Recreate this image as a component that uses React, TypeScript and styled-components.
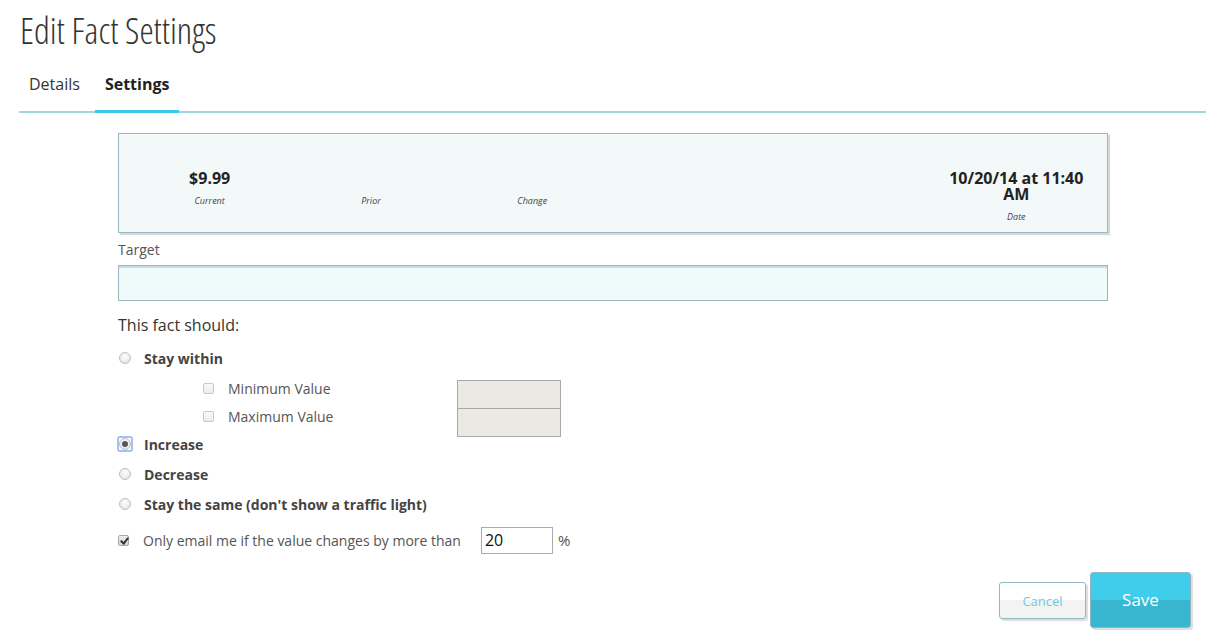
import React from 'react'
import styled, { createGlobalStyle } from 'styled-components'

const GlobalStyle = createGlobalStyle`
  body {
    margin: 0;
    background: #ffffff;
    font-family: 'Open Sans', 'Liberation Sans', sans-serif;
    color: #444;
  }
`

interface Metric {
  value?: string
  label: string
}

const metrics: Metric[] = [
  { value: '$9.99', label: 'Current' },
  { label: 'Prior' },
  { label: 'Change' },
  { label: '' },
  { label: '' },
  { value: '10/20/14 at 11:40 AM', label: 'Date' },
]

const directions = [
  { label: 'Increase', checked: true },
  { label: 'Decrease', checked: false },
  { label: "Stay the same (don't show a traffic light)", checked: false },
]

export default function App() {
  return (
    <Styled.Root>
      <GlobalStyle />
      <Styled.Title>Edit Fact Settings</Styled.Title>

      <Styled.Tabs>
        <Styled.Tab>Details</Styled.Tab>
        <Styled.Tab active>Settings</Styled.Tab>
      </Styled.Tabs>

      <Styled.Body>
        <Styled.Summary>
          {metrics.map((m, i) => (
            <Styled.Metric key={i}>
              <Styled.MetricValue>{m.value}</Styled.MetricValue>
              {m.label && <Styled.MetricLabel>{m.label}</Styled.MetricLabel>}
            </Styled.Metric>
          ))}
        </Styled.Summary>

        <Styled.FieldLabel>Target</Styled.FieldLabel>
        <Styled.TargetInput />

        <Styled.Heading>This fact should:</Styled.Heading>

        <Styled.Options>
          <Styled.Option>
            <Styled.Radio />
            <Styled.OptionLabel>Stay within</Styled.OptionLabel>
          </Styled.Option>

          <Styled.Range>
            <Styled.RangeChecks>
              <Styled.SubOption>
                <Styled.Check />
                <Styled.SubLabel>Minimum Value</Styled.SubLabel>
              </Styled.SubOption>
              <Styled.SubOption>
                <Styled.Check />
                <Styled.SubLabel>Maximum Value</Styled.SubLabel>
              </Styled.SubOption>
            </Styled.RangeChecks>
            <Styled.RangeInputs>
              <Styled.RangeInput />
              <Styled.RangeInput />
            </Styled.RangeInputs>
          </Styled.Range>

          {directions.map((d) => (
            <Styled.Option key={d.label}>
              <Styled.Radio checked={d.checked} />
              <Styled.OptionLabel>{d.label}</Styled.OptionLabel>
            </Styled.Option>
          ))}
        </Styled.Options>

        <Styled.EmailRow>
          <Styled.Check checked />
          <Styled.EmailText>Only email me if the value changes by more than</Styled.EmailText>
          <Styled.PercentInput>20</Styled.PercentInput>
          <Styled.Unit>%</Styled.Unit>
        </Styled.EmailRow>
      </Styled.Body>

      <Styled.Footer>
        <Styled.CancelButton>Cancel</Styled.CancelButton>
        <Styled.SaveButton>Save</Styled.SaveButton>
      </Styled.Footer>
    </Styled.Root>
  )
}

const Styled = {
  Root: styled.div`
    width: 1219px;
    height: 640px;
    padding: 0 13px 0 19px;
    box-sizing: border-box;
    overflow: hidden;
  `,
  Title: styled.h1`
    margin: 0;
    padding: 10px 0 0 1px;
    height: 56px;
    box-sizing: border-box;
    font-family: 'Open Sans', sans-serif;
    font-stretch: 75%;
    font-weight: 300;
    font-size: 36px;
    line-height: 42px;
    color: #333;
  `,
  Tabs: styled.div`
    display: flex;
    border-bottom: 2px solid #a2d6df;
    height: 57px;
    padding-top: 3px;
    box-sizing: border-box;
  `,
  Tab: styled.div<{ active?: boolean }>`
    display: flex;
    align-items: center;
    padding: 0 10px 1px;
    margin-bottom: -2px;
    border-bottom: 3px solid ${({ active }) => (active ? '#3cc8e8' : 'transparent')};
    font-size: 16px;
    font-weight: ${({ active }) => (active ? 700 : 400)};
    color: ${({ active }) => (active ? '#222' : '#333')};
    &:first-child {
      padding-right: 15px;
    }
  `,
  Body: styled.div`
    padding: 20px 0 0 99px;
    width: 990px;
  `,
  Summary: styled.div`
    display: grid;
    grid-template-columns: repeat(6, 1fr);
    height: 100px;
    box-sizing: border-box;
    padding: 36px 10px 0;
    background: #f3f8f8;
    border: 1px solid #9ab9bf;
    box-shadow: 2px 2px 1px #d8d8d8;
  `,
  Metric: styled.div`
    display: flex;
    flex-direction: column;
    align-items: center;
    text-align: center;
    padding: 0 6px;
  `,
  MetricValue: styled.div`
    min-height: 16px;
    font-size: 16px;
    font-weight: 700;
    line-height: 16px;
    color: #222;
  `,
  MetricLabel: styled.div`
    margin-top: 9px;
    font-size: 9px;
    font-style: italic;
    color: #444;
    line-height: 12px;
  `,
  FieldLabel: styled.div`
    margin-top: 7px;
    font-size: 14px;
    line-height: 20px;
    color: #555;
  `,
  TargetInput: styled.div`
    margin-top: 5px;
    height: 36px;
    box-sizing: border-box;
    background: #effafb;
    border: 1px solid #9ab9bf;
    box-shadow: inset 0 2px 0 #c7dde0;
  `,
  Heading: styled.div`
    margin-top: 13px;
    font-size: 16px;
    line-height: 22px;
    color: #333;
  `,
  Options: styled.div`
    display: flex;
    flex-direction: column;
    padding-top: 7px;
  `,
  Option: styled.div`
    display: flex;
    align-items: center;
    height: 30px;
  `,
  OptionLabel: styled.span`
    margin-left: 13px;
    font-size: 14px;
    font-weight: 700;
    color: #444;
  `,
  Radio: styled.span<{ checked?: boolean }>`
    position: relative;
    flex: none;
    width: 12px;
    height: 12px;
    margin-left: 1px;
    border-radius: 50%;
    border: 1px solid #c0c0c0;
    box-sizing: border-box;
    background: radial-gradient(circle at 50% 35%, #fdfdfd 0, #ececec 60%, #d8d8d8 100%);
    ${({ checked }) =>
      checked &&
      `
      &::before {
        content: '';
        position: absolute;
        left: -3px;
        top: -3px;
        width: 16px;
        height: 16px;
        box-sizing: border-box;
        border: 2px solid #a4c2f2;
        border-radius: 3px;
      }
      &::after {
        content: '';
        position: absolute;
        left: 2px;
        top: 2px;
        width: 6px;
        height: 6px;
        border-radius: 50%;
        background: #555;
      }
    `}
  `,
  Range: styled.div`
    display: flex;
    align-items: flex-start;
    height: 56px;
  `,
  RangeChecks: styled.div`
    display: flex;
    flex-direction: column;
    width: 339px;
    padding: 1px 0 0 85px;
    box-sizing: border-box;
  `,
  SubOption: styled.div`
    display: flex;
    align-items: center;
    height: 28px;
  `,
  SubLabel: styled.span`
    margin-left: 14px;
    font-size: 14px;
    color: #555;
    white-space: nowrap;
  `,
  Check: styled.span<{ checked?: boolean }>`
    position: relative;
    flex: none;
    width: 11px;
    height: 11px;
    border-radius: 2px;
    border: 1px solid #c8c8c8;
    box-sizing: border-box;
    background: ${({ checked }) => (checked ? 'linear-gradient(#eee, #d2d2d2)' : 'linear-gradient(#fafafa, #ececec)')};
    ${({ checked }) =>
      checked &&
      `
      border-color: #a8a8a8;
      &::after {
        content: '';
        position: absolute;
        left: 3px;
        top: 0px;
        width: 3px;
        height: 6px;
        border: solid #333;
        border-width: 0 2px 2px 0;
        transform: rotate(40deg);
      }
    `}
  `,
  RangeInputs: styled.div`
    display: flex;
    flex-direction: column;
    flex: none;
    width: 104px;
    margin-top: 7px;
  `,
  RangeInput: styled.div`
    flex: none;
    height: 29px;
    box-sizing: border-box;
    background: #eae9e3;
    border: 1px solid #a9a9a9;
    & + & {
      margin-top: -1px;
    }
  `,
  EmailRow: styled.div`
    display: flex;
    align-items: center;
    height: 28px;
    margin-top: 7px;
  `,
  EmailText: styled.span`
    margin-left: 14px;
    font-size: 14px;
    color: #555;
    white-space: nowrap;
  `,
  PercentInput: styled.div`
    margin-left: 20px;
    width: 72px;
    height: 27px;
    box-sizing: border-box;
    border: 1px solid #aaa;
    padding: 0 3px;
    font-size: 16px;
    line-height: 25px;
    color: #111;
  `,
  Unit: styled.span`
    margin-left: 5px;
    font-size: 15px;
    color: #555;
  `,
  Footer: styled.div`
    display: flex;
    justify-content: flex-end;
    align-items: center;
    gap: 4px;
    margin-top: 18px;
    padding-right: 15px;
  `,
  CancelButton: styled.button`
    width: 87px;
    height: 37px;
    border: 1px solid #8fb8c3;
    border-radius: 3px;
    background: linear-gradient(#fff 0, #fff 50%, #f3f3f3 50%, #f3f3f3 100%);
    box-shadow: 2px 2px 1px #ddd;
    color: #6ccbe5;
    font-family: 'Open Sans', sans-serif;
    font-size: 13px;
    padding: 1px 0 0;
  `,
  SaveButton: styled.button`
    width: 101px;
    height: 56px;
    border: 1px solid #8fb8c3;
    border-radius: 3px;
    background: linear-gradient(#3fcdeb 0, #3fcdeb 50%, #39b7d1 50%, #39b7d1 100%);
    box-shadow: 2px 2px 1px #ddd;
    color: #fff;
    font-family: 'Open Sans', sans-serif;
    font-size: 17px;
    padding: 0 0 2px;
  `,
}
